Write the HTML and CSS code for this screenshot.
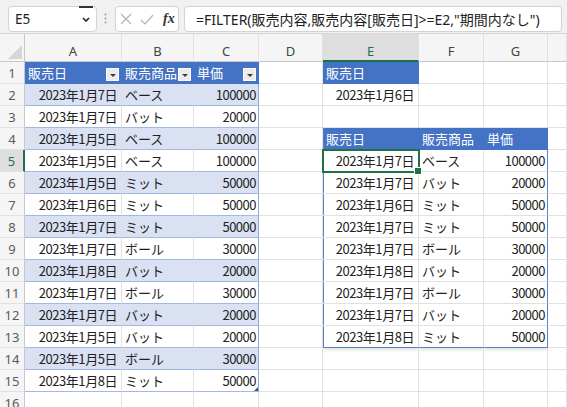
FILE: index.html
```html
<!DOCTYPE html>
<html lang="ja">
<head>
<meta charset="utf-8">
<title>FILTER</title>
<link rel="stylesheet" href="styles.css">
</head>
<body>
<div class="bar">
  <div class="namebox"><span class="nb-text">E5</span><span class="nb-drop"><svg width="8" height="5" viewBox="0 0 8 5"><path d="M1 1 L4 4 L7 1" fill="none" stroke="#222" stroke-width="1.6"/></svg></span></div>
  <svg class="dots" width="3" height="11" viewBox="0 0 3 11"><circle cx="1.5" cy="1.5" r="1" fill="#9a9a9a"/><circle cx="1.5" cy="5.5" r="1" fill="#9a9a9a"/><circle cx="1.5" cy="9.5" r="1" fill="#9a9a9a"/></svg>
  <div class="fxbox">
    <svg width="12" height="12" viewBox="0 0 12 12"><path d="M1 1 L11 11 M11 1 L1 11" stroke="#b4b4b4" stroke-width="1.2" fill="none"/></svg>
    <svg width="14" height="11" viewBox="0 0 14 11"><path d="M1 6 L5 10 L13 1" stroke="#b4b4b4" stroke-width="1.2" fill="none"/></svg>
    <span class="fx">fx</span>
  </div>
  <div class="formula">=FILTER(販売内容,販売内容[販売日]&gt;=E2,"期間内なし")</div>
</div>

<div class="sheet">
  <div class="corner"><svg width="25" height="27" viewBox="0 0 25 27"><polygon points="8,25 22,25 22,11" fill="#d6d6d6"/></svg></div>
  <div class="ch">A</div><div class="ch">B</div><div class="ch">C</div><div class="ch">D</div><div class="ch sel">E</div><div class="ch">F</div><div class="ch">G</div><div class="ch"></div>

  <div class="rh">1</div>
  <div class="c h">販売日<i class="fb"></i></div>
  <div class="c h">販売商品<i class="fb"></i></div>
  <div class="c h">単価<i class="fb"></i></div>
  <div class="c"></div>
  <div class="c h">販売日</div>
  <div class="c"></div><div class="c"></div><div class="c"></div>

  <div class="rh">2</div>
  <div class="c t bd d">2023年1月7日</div>
  <div class="c t bd">ベース</div>
  <div class="c t bd te n">100000</div>
  <div class="c"></div>
  <div class="c d">2023年1月6日</div>
  <div class="c"></div><div class="c"></div><div class="c"></div>

  <div class="rh">3</div>
  <div class="c t d">2023年1月7日</div>
  <div class="c t">バット</div>
  <div class="c t te n">20000</div>
  <div class="c"></div><div class="c"></div><div class="c"></div><div class="c"></div><div class="c"></div>

  <div class="rh">4</div>
  <div class="c t bd d">2023年1月5日</div>
  <div class="c t bd">ベース</div>
  <div class="c t bd te n">100000</div>
  <div class="c"></div>
  <div class="c h sl">販売日</div>
  <div class="c h">販売商品</div>
  <div class="c h">単価</div>
  <div class="c"></div>

  <div class="rh rsel">5</div>
  <div class="c t d">2023年1月5日</div>
  <div class="c t">ベース</div>
  <div class="c t te n">100000</div>
  <div class="c"></div>
  <div class="c d sl act">2023年1月7日</div>
  <div class="c">ベース</div>
  <div class="c n sr">100000</div>
  <div class="c"></div>

  <div class="rh">6</div>
  <div class="c t bd d">2023年1月5日</div>
  <div class="c t bd">ミット</div>
  <div class="c t bd te n">50000</div>
  <div class="c"></div>
  <div class="c d sl">2023年1月7日</div>
  <div class="c">バット</div>
  <div class="c n sr">20000</div>
  <div class="c"></div>

  <div class="rh">7</div>
  <div class="c t d">2023年1月6日</div>
  <div class="c t">ミット</div>
  <div class="c t te n">50000</div>
  <div class="c"></div>
  <div class="c d sl">2023年1月6日</div>
  <div class="c">ミット</div>
  <div class="c n sr">50000</div>
  <div class="c"></div>

  <div class="rh">8</div>
  <div class="c t bd d">2023年1月7日</div>
  <div class="c t bd">ミット</div>
  <div class="c t bd te n">50000</div>
  <div class="c"></div>
  <div class="c d sl">2023年1月7日</div>
  <div class="c">ミット</div>
  <div class="c n sr">50000</div>
  <div class="c"></div>

  <div class="rh">9</div>
  <div class="c t d">2023年1月7日</div>
  <div class="c t">ボール</div>
  <div class="c t te n">30000</div>
  <div class="c"></div>
  <div class="c d sl">2023年1月7日</div>
  <div class="c">ボール</div>
  <div class="c n sr">30000</div>
  <div class="c"></div>

  <div class="rh">10</div>
  <div class="c t bd d">2023年1月8日</div>
  <div class="c t bd">バット</div>
  <div class="c t bd te n">20000</div>
  <div class="c"></div>
  <div class="c d sl">2023年1月8日</div>
  <div class="c">バット</div>
  <div class="c n sr">20000</div>
  <div class="c"></div>

  <div class="rh">11</div>
  <div class="c t d">2023年1月7日</div>
  <div class="c t">ボール</div>
  <div class="c t te n">30000</div>
  <div class="c"></div>
  <div class="c d sl">2023年1月7日</div>
  <div class="c">ボール</div>
  <div class="c n sr">30000</div>
  <div class="c"></div>

  <div class="rh">12</div>
  <div class="c t bd d">2023年1月7日</div>
  <div class="c t bd">バット</div>
  <div class="c t bd te n">20000</div>
  <div class="c"></div>
  <div class="c d sl">2023年1月7日</div>
  <div class="c">バット</div>
  <div class="c n sr">20000</div>
  <div class="c"></div>

  <div class="rh">13</div>
  <div class="c t d">2023年1月5日</div>
  <div class="c t">バット</div>
  <div class="c t te n">20000</div>
  <div class="c"></div>
  <div class="c d sl sb">2023年1月8日</div>
  <div class="c sb">ミット</div>
  <div class="c n sr sb">50000</div>
  <div class="c"></div>

  <div class="rh">14</div>
  <div class="c t bd d">2023年1月5日</div>
  <div class="c t bd">ボール</div>
  <div class="c t bd te n">30000</div>
  <div class="c"></div><div class="c"></div><div class="c"></div><div class="c"></div><div class="c"></div>

  <div class="rh">15</div>
  <div class="c t d">2023年1月8日</div>
  <div class="c t">ミット</div>
  <div class="c t te n rs">50000</div>
  <div class="c"></div><div class="c"></div><div class="c"></div><div class="c"></div><div class="c"></div>

  <div class="rh">16</div>
  <div class="c"></div><div class="c"></div><div class="c"></div><div class="c"></div><div class="c"></div><div class="c"></div><div class="c"></div><div class="c"></div>
</div>
</body>
</html>
```

FILE: styles.css
```css
* { box-sizing: border-box; margin: 0; padding: 0; }
html, body { width: 567px; height: 407px; overflow: hidden; }
body {
  background: #fff;
  font-family: "Noto Sans CJK JP", "Noto Sans", sans-serif;
  color: #222;
}

/* formula bar */
.bar {
  height: 34px;
  background: #f1f1f1;
  border-bottom: 1px solid #d6d6d6;
  display: flex;
  align-items: flex-start;
  padding: 6px 0 0 8px;
}
.namebox {
  width: 89px;
  height: 26px;
  background: #fff;
  border: 1px solid #d3d3d3;
  border-radius: 4px;
  display: flex;
  align-items: center;
  justify-content: space-between;
  padding: 0 3px 0 6px;
  font: 13.5px "Noto Sans", sans-serif;
  color: #222;
}
.nb-drop {
  width: 14px;
  height: 25px;
  display: flex;
  align-items: center;
  justify-content: center;
  border-top: 2px solid #333;
  margin-top: -1px;
}
.dots { margin: 7px 8px 0 7px; }
.fxbox {
  width: 64px;
  height: 26px;
  background: #fff;
  border: 1px solid #d3d3d3;
  border-radius: 4px;
  display: flex;
  align-items: center;
  gap: 8px;
  padding-left: 4px;
}
.fx {
  font: italic bold 14px "Liberation Serif", serif;
  color: #333;
  margin-left: 1px;
}
.formula {
  flex: 1;
  margin: 0 5px 0 5px;
  height: 26px;
  background: #fff;
  border: 1px solid #d3d3d3;
  border-radius: 4px;
  display: flex;
  align-items: center;
  padding-left: 11px;
  font-size: 14px;
  font-family: "Noto Sans", "Noto Sans CJK JP", sans-serif;
  white-space: nowrap;
  overflow: hidden;
  color: #222;
}

/* sheet grid */
.sheet {
  display: grid;
  grid-template-columns: 25px 97px 72px 65px 64px 96px 65px 64px 19px;
  grid-template-rows: 28px repeat(16, 22px);
}
.corner {
  background: #f5f5f5;
  border-right: 1px solid #c8c8c8;
  border-bottom: 1px solid #c8c8c8;
}
.corner svg { display: block; }
.ch {
  background: #f5f5f5;
  border-right: 1px solid #e1e1e1;
  border-bottom: 1px solid #c8c8c8;
  display: flex;
  align-items: center;
  justify-content: center;
  padding-top: 6px;
  font: 13px "Noto Sans", sans-serif;
  color: #444;
}
.ch.sel {
  background: #dedede;
  color: #1e7145;
  border-bottom: 2px solid #1e7145;
  padding-top: 7px;
}
.rh {
  background: #f5f5f5;
  border-right: 1px solid #c8c8c8;
  border-bottom: 1px solid #e1e1e1;
  display: flex;
  align-items: center;
  justify-content: center;
  font: 13px "Noto Sans", sans-serif;
  color: #5a5a5a;
}
.rh.rsel {
  background: #dedede;
  color: #1e7145;
  border-right: 2px solid #1e7145;
}
.c {
  border-right: 1px solid #e1e1e1;
  border-bottom: 1px solid #e1e1e1;
  display: flex;
  align-items: center;
  padding-left: 3px;
  font-size: 13px;
  line-height: 1;
  white-space: nowrap;
  overflow: hidden;
  color: #222;
}
.t { border-bottom-color: #a3b8e2; }
.bd { background: #d9e1f2; }
.te { border-right-color: #8ea9db; }
.h {
  background: #4472c4;
  color: #fff;
  border-right-color: #4472c4;
  border-bottom-color: #4472c4;
}
.d { justify-content: flex-end; padding-right: 4px; letter-spacing: -0.45px; }
.n { justify-content: flex-end; padding-right: 2px; letter-spacing: -0.5px; }

/* filter buttons in table headers */
.fb {
  width: 13px;
  height: 13px;
  margin-left: auto;
  margin-right: 2px;
  align-self: flex-end;
  margin-bottom: 2px;
  background: #ececec;
  border: 1px solid #fafafa;
  display: flex;
  align-items: center;
  justify-content: center;
  padding-top: 2px;
}
.fb::after {
  content: "";
  border-left: 3px solid transparent;
  border-right: 3px solid transparent;
  border-top: 3px solid #3a3a3a;
}

/* spill range outline */
.sl { box-shadow: inset 1px 0 0 #5b80c8; }
.sr { border-right-color: #5b80c8; }
.sb {
  border-bottom-color: #5b80c8;
  position: relative;
  z-index: 1;
  box-shadow: 0 3px 3px -1px rgba(0, 0, 0, 0.12);
}
.sl.sb { box-shadow: inset 1px 0 0 #5b80c8, 0 3px 3px -1px rgba(0, 0, 0, 0.12); }

/* active cell */
.act {
  position: relative;
  overflow: visible;
  outline: 2px solid #1e7145;
  outline-offset: -1px;
  z-index: 2;
}
.act::after {
  content: "";
  position: absolute;
  right: -4px;
  bottom: -4px;
  width: 6px;
  height: 6px;
  background: #1e7145;
  border: 1px solid #fff;
}

/* table resize handle */
.rs { position: relative; overflow: visible; }
.rs::after {
  content: "";
  position: absolute;
  right: 0;
  bottom: 0;
  border-left: 4px solid transparent;
  border-bottom: 4px solid #2f5597;
}
```
